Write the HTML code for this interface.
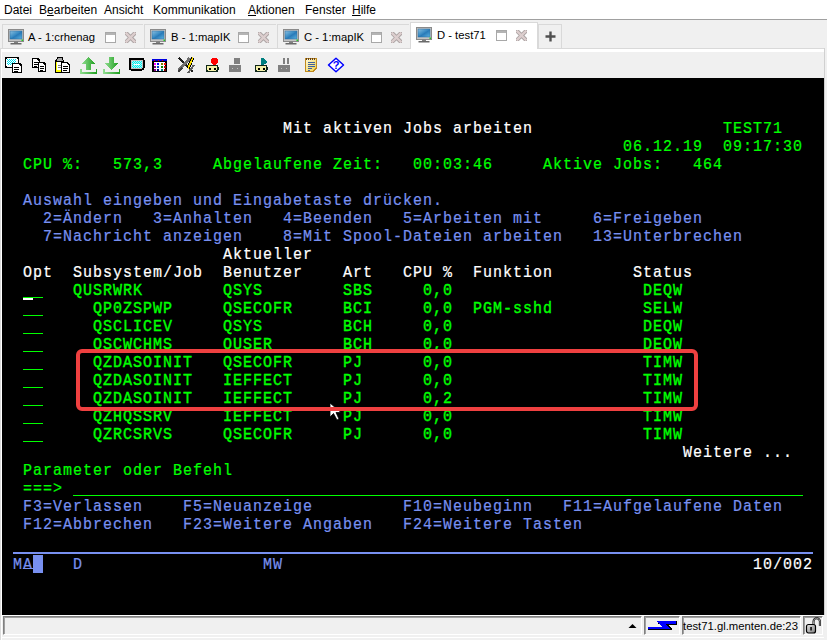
<!DOCTYPE html>
<html><head><meta charset="utf-8">
<style>
html,body{margin:0;padding:0;}
body{width:827px;height:640px;position:relative;overflow:hidden;background:#f0f0f0;font-family:"Liberation Sans",sans-serif;}
.menu{position:absolute;left:0;top:0;width:827px;height:19px;background:#fff;}
.mi{position:absolute;top:3px;font-size:12px;color:#000;line-height:15px;}
.term{position:absolute;left:2px;top:78px;width:822px;height:537px;background:#000;}
.t{position:absolute;font-family:"Liberation Mono",monospace;font-size:15px;letter-spacing:1px;line-height:18px;white-space:pre;transform:scaleY(1.1);transform-origin:0 0;}
.n{-webkit-text-stroke:0.2px currentColor;}
.b{-webkit-text-stroke:0.35px currentColor;}
.tl{position:absolute;top:30px;font-size:11.25px;line-height:14px;color:#000;white-space:pre;}
.ul{position:absolute;height:1px;background:#00ff00;}
</style></head><body>
<div class="menu">
<div class="mi" style="left:4px">Datei</div>
<div class="mi" style="left:39px">B<u>e</u>arbeiten</div>
<div class="mi" style="left:104px">Ansicht</div>
<div class="mi" style="left:153px">Kommunikation</div>
<div class="mi" style="left:248px"><u>A</u>ktionen</div>
<div class="mi" style="left:305px">Fenster</div>
<div class="mi" style="left:352px"><u>H</u>ilfe</div>
</div>
<div style="position:absolute;left:0;top:19px;width:827px;height:1px;background:#a0a0a0"></div>
<div style="position:absolute;left:0;top:20px;width:827px;height:28px;background:#f0f0f0"></div>
<div style="position:absolute;left:2px;top:24px;width:141px;height:24px;background:#f0f0f0;border-left:1px solid #d9d9d9;border-top:1px solid #d9d9d9;box-sizing:border-box"></div><svg width="17" height="17" viewBox="0 0 17 17" style="position:absolute;left:8px;top:28px">
<defs><linearGradient id="sg1" x1="0" y1="0" x2="1" y2="1"><stop offset="0" stop-color="#8cc0e0"/><stop offset="0.45" stop-color="#3a8cc4"/><stop offset="0.55" stop-color="#2a7ab8"/><stop offset="1" stop-color="#5ab4e2"/></linearGradient></defs>
<rect x="0.5" y="1.5" width="15" height="12" fill="#c4c4c4" stroke="#8a8a8a"/>
<rect x="2" y="3" width="12" height="8" fill="url(#sg1)" stroke="#2a6a9a" stroke-width="0.5"/>
<rect x="13.5" y="11.5" width="1.5" height="1.5" fill="#20d020"/>
<rect x="6" y="13.5" width="4" height="1.5" fill="#808080"/>
<rect x="2.5" y="15" width="11" height="1.5" fill="#6a6a6a"/>
</svg><div class="tl" style="left:28px;top:30px">A - 1:crhenag</div><svg width="11" height="11" viewBox="0 0 11 11" style="position:absolute;left:105px;top:32px">
<rect x="0.5" y="0.5" width="10" height="10" fill="#fff" stroke="#a8a8a8"/>
<rect x="1" y="1" width="9" height="2" fill="#b4b4b4"/>
</svg><svg width="11" height="11" viewBox="0 0 11 11" style="position:absolute;left:125px;top:32px">
<path d="M1.5 1.5 L9.5 9.5 M9.5 1.5 L1.5 9.5" stroke="#a8a0a0" stroke-width="4" stroke-linecap="square"/>
<path d="M1.5 1.5 L9.5 9.5 M9.5 1.5 L1.5 9.5" stroke="#dccece" stroke-width="2.4" stroke-linecap="square"/>
</svg>
<div style="position:absolute;left:144px;top:24px;width:132px;height:24px;background:#f0f0f0;border-left:1px solid #d9d9d9;border-top:1px solid #d9d9d9;box-sizing:border-box"></div><svg width="17" height="17" viewBox="0 0 17 17" style="position:absolute;left:150px;top:28px">
<defs><linearGradient id="sg2" x1="0" y1="0" x2="1" y2="1"><stop offset="0" stop-color="#8cc0e0"/><stop offset="0.45" stop-color="#3a8cc4"/><stop offset="0.55" stop-color="#2a7ab8"/><stop offset="1" stop-color="#5ab4e2"/></linearGradient></defs>
<rect x="0.5" y="1.5" width="15" height="12" fill="#c4c4c4" stroke="#8a8a8a"/>
<rect x="2" y="3" width="12" height="8" fill="url(#sg2)" stroke="#2a6a9a" stroke-width="0.5"/>
<rect x="13.5" y="11.5" width="1.5" height="1.5" fill="#20d020"/>
<rect x="6" y="13.5" width="4" height="1.5" fill="#808080"/>
<rect x="2.5" y="15" width="11" height="1.5" fill="#6a6a6a"/>
</svg><div class="tl" style="left:171px;top:30px">B - 1:mapIK</div><svg width="11" height="11" viewBox="0 0 11 11" style="position:absolute;left:238px;top:32px">
<rect x="0.5" y="0.5" width="10" height="10" fill="#fff" stroke="#a8a8a8"/>
<rect x="1" y="1" width="9" height="2" fill="#b4b4b4"/>
</svg><svg width="11" height="11" viewBox="0 0 11 11" style="position:absolute;left:258px;top:32px">
<path d="M1.5 1.5 L9.5 9.5 M9.5 1.5 L1.5 9.5" stroke="#a8a0a0" stroke-width="4" stroke-linecap="square"/>
<path d="M1.5 1.5 L9.5 9.5 M9.5 1.5 L1.5 9.5" stroke="#dccece" stroke-width="2.4" stroke-linecap="square"/>
</svg>
<div style="position:absolute;left:277px;top:24px;width:132px;height:24px;background:#f0f0f0;border-left:1px solid #d9d9d9;border-top:1px solid #d9d9d9;box-sizing:border-box"></div><svg width="17" height="17" viewBox="0 0 17 17" style="position:absolute;left:283px;top:28px">
<defs><linearGradient id="sg3" x1="0" y1="0" x2="1" y2="1"><stop offset="0" stop-color="#8cc0e0"/><stop offset="0.45" stop-color="#3a8cc4"/><stop offset="0.55" stop-color="#2a7ab8"/><stop offset="1" stop-color="#5ab4e2"/></linearGradient></defs>
<rect x="0.5" y="1.5" width="15" height="12" fill="#c4c4c4" stroke="#8a8a8a"/>
<rect x="2" y="3" width="12" height="8" fill="url(#sg3)" stroke="#2a6a9a" stroke-width="0.5"/>
<rect x="13.5" y="11.5" width="1.5" height="1.5" fill="#20d020"/>
<rect x="6" y="13.5" width="4" height="1.5" fill="#808080"/>
<rect x="2.5" y="15" width="11" height="1.5" fill="#6a6a6a"/>
</svg><div class="tl" style="left:304px;top:30px">C - 1:mapIK</div><svg width="11" height="11" viewBox="0 0 11 11" style="position:absolute;left:371px;top:32px">
<rect x="0.5" y="0.5" width="10" height="10" fill="#fff" stroke="#a8a8a8"/>
<rect x="1" y="1" width="9" height="2" fill="#b4b4b4"/>
</svg><svg width="11" height="11" viewBox="0 0 11 11" style="position:absolute;left:391px;top:32px">
<path d="M1.5 1.5 L9.5 9.5 M9.5 1.5 L1.5 9.5" stroke="#a8a0a0" stroke-width="4" stroke-linecap="square"/>
<path d="M1.5 1.5 L9.5 9.5 M9.5 1.5 L1.5 9.5" stroke="#dccece" stroke-width="2.4" stroke-linecap="square"/>
</svg>
<div style="position:absolute;left:0;top:48px;width:825px;height:1px;background:#d9d9d9"></div>
<div style="position:absolute;left:410px;top:22px;width:128px;height:27px;background:#ffffff;border-left:1px solid #d9d9d9;border-top:1px solid #d9d9d9;border-right:1px solid #d9d9d9;box-sizing:border-box"></div><svg width="17" height="17" viewBox="0 0 17 17" style="position:absolute;left:416px;top:26px">
<defs><linearGradient id="sg4" x1="0" y1="0" x2="1" y2="1"><stop offset="0" stop-color="#8cc0e0"/><stop offset="0.45" stop-color="#3a8cc4"/><stop offset="0.55" stop-color="#2a7ab8"/><stop offset="1" stop-color="#5ab4e2"/></linearGradient></defs>
<rect x="0.5" y="1.5" width="15" height="12" fill="#c4c4c4" stroke="#8a8a8a"/>
<rect x="2" y="3" width="12" height="8" fill="url(#sg4)" stroke="#2a6a9a" stroke-width="0.5"/>
<rect x="13.5" y="11.5" width="1.5" height="1.5" fill="#20d020"/>
<rect x="6" y="13.5" width="4" height="1.5" fill="#808080"/>
<rect x="2.5" y="15" width="11" height="1.5" fill="#6a6a6a"/>
</svg><div class="tl" style="left:437px;top:28px">D - test71</div><svg width="11" height="11" viewBox="0 0 11 11" style="position:absolute;left:496px;top:30px">
<rect x="0.5" y="0.5" width="10" height="10" fill="#fff" stroke="#a8a8a8"/>
<rect x="1" y="1" width="9" height="2" fill="#b4b4b4"/>
</svg><svg width="11" height="11" viewBox="0 0 11 11" style="position:absolute;left:516px;top:30px">
<path d="M1.5 1.5 L9.5 9.5 M9.5 1.5 L1.5 9.5" stroke="#a8a0a0" stroke-width="4" stroke-linecap="square"/>
<path d="M1.5 1.5 L9.5 9.5 M9.5 1.5 L1.5 9.5" stroke="#dccece" stroke-width="2.4" stroke-linecap="square"/>
</svg>
<div style="position:absolute;left:538px;top:24px;width:24px;height:24px;background:#f0f0f0;border:1px solid #d9d9d9;border-bottom:none;box-sizing:border-box"></div>
<svg width="12" height="12" style="position:absolute;left:545px;top:31px"><path d="M5.5 0.5V10.5M0.5 5.5H10.5" stroke="#505050" stroke-width="2.4"/></svg>
<div style="position:absolute;left:1px;top:49px;width:823px;height:29px;background:#f0f0f0;border-top:3px solid #fff;box-sizing:border-box"></div>
<div style="position:absolute;left:824px;top:48px;width:1px;height:567px;background:#d0d0d0"></div>
<div style="position:absolute;left:0px;top:48px;width:1px;height:592px;background:#dcdcdc"></div>
<div style="position:absolute;left:1px;top:49px;width:1px;height:591px;background:#fff"></div>
<svg width="18" height="18" viewBox="0 0 18 18" style="position:absolute;left:4px;top:56px" shape-rendering="crispEdges"><defs><pattern id="cy" width="2" height="2" patternUnits="userSpaceOnUse"><rect width="2" height="2" fill="#ffffff"/><rect width="1" height="1" fill="#00e0f0"/><rect x="1" y="1" width="1" height="1" fill="#00e0f0"/></pattern></defs><rect x="1.5" y="1.5" width="13" height="10" rx="2" fill="#fff" stroke="#000" stroke-width="1.6"/><rect x="3" y="3" width="9" height="6" fill="url(#cy)"/><path d="M8.5 7.5H15.5L17.5 9.5V16.5H8.5Z" fill="#fff" stroke="#000" stroke-width="1.6"/><path d="M10 11H15M10 13H15M10 15H14" stroke="#000" stroke-width="1"/></svg>
<svg width="17" height="17" viewBox="0 0 17 17" style="position:absolute;left:31px;top:57px" shape-rendering="crispEdges"><path d="M1.5 1.5H6.5L8.5 3.5V10.5H1.5Z" fill="#fff" stroke="#000" stroke-width="1.5"/><path d="M3 5H7M3 7H7M3 9H6" stroke="#000" stroke-width="1"/><path d="M7.5 5.5H12.5L14.5 7.5V14.5H7.5Z" fill="#fff" stroke="#000" stroke-width="1.5"/><path d="M9 9H13M9 11H13M9 13H12" stroke="#000" stroke-width="1"/></svg>
<svg width="17" height="18" viewBox="0 0 17 18" style="position:absolute;left:54px;top:56px" shape-rendering="crispEdges"><rect x="1.6" y="4.6" width="8" height="11.5" fill="#fff" stroke="#000" stroke-width="1.2"/><rect x="2.6" y="5.6" width="6" height="9.5" fill="none" stroke="#ffff00" stroke-width="1.4"/><path d="M3.5 1.5H8L9.5 5H2Z" fill="#a8a8a8" stroke="#000" stroke-width="1"/><path d="M7.5 6.5H13L15.5 9V16.5H7.5Z" fill="#fff" stroke="#000" stroke-width="1.5"/><path d="M9 10H14M9 12H14M9 14H13" stroke="#000"/><path d="M4 9H7M4 11H7" stroke="#808080"/></svg>
<svg width="17" height="18" viewBox="0 0 17 18" style="position:absolute;left:80px;top:56px" shape-rendering="crispEdges"><defs><linearGradient id="gr1" x1="0" y1="0" x2="1" y2="0"><stop offset="0" stop-color="#8fdc8f"/><stop offset="1" stop-color="#22a022"/></linearGradient></defs><path d="M8.5 1L15 8H11V14H6V8H2Z" fill="url(#gr1)"/><path d="M0.5 13V16.5H16.5V13" fill="none" stroke="url(#gr1)" stroke-width="2"/></svg>
<svg width="17" height="18" viewBox="0 0 17 18" style="position:absolute;left:103px;top:56px" shape-rendering="crispEdges"><defs><linearGradient id="gr2" x1="0" y1="0" x2="1" y2="0"><stop offset="0" stop-color="#8fdc8f"/><stop offset="1" stop-color="#22a022"/></linearGradient></defs><path d="M6 1H11V7H15L8.5 14L2 7H6Z" fill="url(#gr2)"/><path d="M0.5 13V16.5H16.5V13" fill="none" stroke="url(#gr2)" stroke-width="2"/></svg>
<svg width="18" height="15" viewBox="0 0 18 15" style="position:absolute;left:128px;top:57px" shape-rendering="crispEdges"><defs><pattern id="cy2" width="2" height="2" patternUnits="userSpaceOnUse"><rect width="2" height="2" fill="#00f0f0"/><rect width="1" height="1" fill="#b0f8f8"/><rect x="1" y="1" width="1" height="1" fill="#b0f8f8"/></pattern></defs><rect x="1.6" y="1.6" width="14" height="11" rx="2" fill="#c8c0c0" stroke="#000" stroke-width="2"/><rect x="4" y="4" width="9.5" height="6.5" fill="url(#cy2)"/><rect x="6" y="7" width="6" height="1" fill="#fff"/></svg>
<svg width="17" height="14" viewBox="0 0 17 14" style="position:absolute;left:151px;top:59px" shape-rendering="crispEdges"><rect x="1.8" y="2" width="13.4" height="10.6" fill="#fff" stroke="#000" stroke-width="1.6"/><rect x="1" y="0" width="15" height="2.2" fill="#0000e0"/><rect x="3" y="0.5" width="1" height="1" fill="#e00000"/><rect x="7" y="0.5" width="1" height="1" fill="#e00000"/><rect x="11" y="0.5" width="1" height="1" fill="#e00000"/><rect x="3.0" y="3.5" width="2" height="2" fill="#ff00ff"/><rect x="6.3" y="3.5" width="2" height="2" fill="#0000ff"/><rect x="9.6" y="3.5" width="2" height="2" fill="#808000"/><rect x="12.9" y="3.5" width="2" height="2" fill="#ff0000"/><rect x="3.0" y="6.5" width="2" height="2" fill="#800080"/><rect x="6.3" y="6.5" width="2" height="2" fill="#0040c0"/><rect x="9.6" y="6.5" width="2" height="2" fill="#008000"/><rect x="12.9" y="6.5" width="2" height="2" fill="#c00000"/><rect x="3.0" y="9.5" width="2" height="2" fill="#800080"/><rect x="6.3" y="9.5" width="2" height="2" fill="#000080"/><rect x="9.6" y="9.5" width="2" height="2" fill="#008080"/><rect x="12.9" y="9.5" width="2" height="2" fill="#800000"/></svg>
<svg width="18" height="18" viewBox="0 0 18 18" style="position:absolute;left:177px;top:56px" shape-rendering="crispEdges"><path d="M2 2L16 16" stroke="#202020" stroke-width="2.2"/><path d="M13 2L2 14" stroke="#707070" stroke-width="3"/><path d="M1 16L5 12" stroke="#404040" stroke-width="2"/><path d="M16 1.5L11 12.5" stroke="#000" stroke-width="3.2"/><path d="M16 1.5L11 12.5" stroke="#ffe000" stroke-width="1.6"/><path d="M17 9L11 17" stroke="#606060" stroke-width="2"/></svg>
<svg width="14" height="17" viewBox="0 0 14 17" style="position:absolute;left:205px;top:56px" shape-rendering="crispEdges"><circle cx="9.5" cy="5.2" r="3.6" fill="#ff0000"/><rect x="1.3" y="9.3" width="11.4" height="6" rx="1.4" fill="#f4f0a8" stroke="#10281a" stroke-width="1.6"/><rect x="3.5" y="11.5" width="2" height="2" fill="#000"/><rect x="8.5" y="11.5" width="2" height="2" fill="#000"/></svg>
<svg width="14" height="17" viewBox="0 0 14 17" style="position:absolute;left:228px;top:56px" shape-rendering="crispEdges"><rect x="6" y="2" width="6" height="6" fill="#808080"/><rect x="1" y="9" width="12" height="7" fill="#808080"/><rect x="4" y="12" width="1" height="1" fill="#c0c0c0"/><rect x="9" y="12" width="1" height="1" fill="#c0c0c0"/></svg>
<svg width="15" height="17" viewBox="0 0 15 17" style="position:absolute;left:254px;top:56px" shape-rendering="crispEdges"><path d="M7 2H9L14 6L9 9.5H7Z" fill="#008080"/><rect x="1.3" y="9.3" width="11.4" height="6" rx="1.4" fill="#f4f0a8" stroke="#10281a" stroke-width="1.6"/><rect x="3.5" y="11.5" width="2" height="2" fill="#000"/><rect x="8.5" y="11.5" width="2" height="2" fill="#000"/></svg>
<svg width="14" height="17" viewBox="0 0 14 17" style="position:absolute;left:277px;top:56px" shape-rendering="crispEdges"><rect x="6" y="2" width="2.4" height="6" fill="#808080"/><rect x="10" y="2" width="2.4" height="6" fill="#808080"/><rect x="1" y="9" width="12" height="7" fill="#808080"/><rect x="4" y="12" width="1" height="1" fill="#c0c0c0"/><rect x="9" y="12" width="1" height="1" fill="#c0c0c0"/></svg>
<svg width="14" height="17" viewBox="0 0 14 17" style="position:absolute;left:304px;top:56px" shape-rendering="crispEdges"><defs><linearGradient id="np" x1="0" y1="0" x2="1" y2="1"><stop offset="0" stop-color="#fffbe0"/><stop offset="1" stop-color="#f0d040"/></linearGradient></defs><path d="M1.5 2.5H12.5V12L9 15.5H1.5Z" fill="url(#np)" stroke="#c08a20" stroke-width="1.4"/><path d="M2.5 1.5V3.5M4.5 1.5V3.5M6.5 1.5V3.5M8.5 1.5V3.5M10.5 1.5V3.5" stroke="#604020" stroke-width="1"/><path d="M3.5 6H11M3.5 8H11M3.5 10H11M3.5 12H8M3.5 14H6" stroke="#4060a0" stroke-width="1"/></svg>
<svg width="18" height="16" viewBox="0 0 18 16" style="position:absolute;left:327px;top:57px"><path d="M9 1.2L16.5 8L9 14.8L1.5 8Z" fill="#fff" stroke="#0000ff" stroke-width="1.5" stroke-linejoin="round"/><text x="9" y="12.3" text-anchor="middle" font-family="Liberation Sans" font-weight="bold" font-size="11" fill="#0000ff">?</text></svg>
<div style="position:absolute;left:2px;top:615px;width:822px;height:1px;background:#fff"></div>
<div style="position:absolute;left:3px;top:616px;width:639px;height:19px;background:#f0f0f0;border-top:1px solid #808080;border-left:1px solid #808080;border-bottom:1px solid #fff;border-right:1px solid #fff;box-sizing:border-box"></div>
<div style="position:absolute;left:4px;top:617px;width:637px;height:1px;background:#a0a0a0"></div>
<div style="position:absolute;left:4px;top:617px;width:1px;height:17px;background:#a0a0a0"></div>
<div style="position:absolute;left:644px;top:616px;width:36px;height:19px;background:#f0f0f0;border-top:1px solid #808080;border-left:1px solid #808080;border-bottom:1px solid #fff;border-right:1px solid #fff;box-sizing:border-box"></div>
<div style="position:absolute;left:645px;top:617px;width:34px;height:1px;background:#a0a0a0"></div>
<div style="position:absolute;left:645px;top:617px;width:1px;height:17px;background:#a0a0a0"></div>
<div style="position:absolute;left:682px;top:616px;width:119px;height:19px;background:#f0f0f0;border-top:1px solid #808080;border-left:1px solid #808080;border-bottom:1px solid #fff;border-right:1px solid #fff;box-sizing:border-box"></div>
<div style="position:absolute;left:683px;top:617px;width:117px;height:1px;background:#a0a0a0"></div>
<div style="position:absolute;left:683px;top:617px;width:1px;height:17px;background:#a0a0a0"></div>
<div style="position:absolute;left:803px;top:616px;width:20px;height:19px;background:#f0f0f0;border-top:1px solid #808080;border-left:1px solid #808080;border-bottom:1px solid #fff;border-right:1px solid #fff;box-sizing:border-box"></div>
<div style="position:absolute;left:804px;top:617px;width:18px;height:1px;background:#a0a0a0"></div>
<div style="position:absolute;left:804px;top:617px;width:1px;height:17px;background:#a0a0a0"></div>
<div style="position:absolute;left:2px;top:637px;width:822px;height:1px;background:#fff"></div>
<svg width="9" height="6" style="position:absolute;left:628px;top:623px"><path d="M0.5 5H8.5L4.5 1Z" fill="#000"/></svg>
<svg width="32" height="12" style="position:absolute;left:647px;top:620px" shape-rendering="crispEdges"><path d="M11 1H30V4.5H20.5L25 8V10H23L16 4.5V1Z" fill="#000"/><path d="M1 7H16L10.5 3H29V4H19L24.5 9.5H1Z" fill="#000"/><path d="M1 7H15.5L10 1H29V4H18.5L23.5 9H1Z" fill="#0000ff"/></svg>
<div style="position:absolute;left:683px;top:619px;font-size:11.3px;line-height:14px;color:#000;white-space:pre;letter-spacing:0px">test71.gl.menten.de:23</div>
<svg width="18" height="17" style="position:absolute;left:804px;top:617px"><defs><linearGradient id="lk" x1="0" y1="0" x2="1" y2="1"><stop offset="0" stop-color="#e8e8e8"/><stop offset="1" stop-color="#808080"/></linearGradient></defs><path d="M9.5 8.5V4.5a3.2 3.2 0 0 1 6.4 0V9" fill="none" stroke="#000" stroke-width="2"/><path d="M9.5 8.5V4.5a3.2 3.2 0 0 1 6.4 0V9" fill="none" stroke="#fff" stroke-width="0.6"/><rect x="2.5" y="7.5" width="9" height="8.5" rx="2" fill="url(#lk)" stroke="#000" stroke-width="1.2"/><rect x="6.3" y="10" width="1.5" height="3.5" fill="#000"/></svg>
<div class="term"></div>
<div id="tt" style="position:absolute;left:0;top:0">
<div class="t n" style="left:283px;top:120px;color:#ffffff">Mit aktiven Jobs arbeiten</div>
<div class="t n" style="left:723px;top:120px;color:#00ff00">TEST71</div>
<div class="t n" style="left:623px;top:138px;color:#00ff00">06.12.19  09:17:30</div>
<div class="t n" style="left:23px;top:156px;color:#00ff00">CPU %:</div>
<div class="t n" style="left:113px;top:156px;color:#00ff00">573,3</div>
<div class="t n" style="left:213px;top:156px;color:#00ff00">Abgelaufene Zeit:</div>
<div class="t n" style="left:413px;top:156px;color:#00ff00">00:03:46</div>
<div class="t n" style="left:543px;top:156px;color:#00ff00">Aktive Jobs:</div>
<div class="t n" style="left:693px;top:156px;color:#00ff00">464</div>
<div class="t n" style="left:23px;top:192px;color:#7890f0">Auswahl eingeben und Eingabetaste drücken.</div>
<div class="t n" style="left:43px;top:210px;color:#7890f0">2=Ändern</div>
<div class="t n" style="left:153px;top:210px;color:#7890f0">3=Anhalten</div>
<div class="t n" style="left:283px;top:210px;color:#7890f0">4=Beenden</div>
<div class="t n" style="left:403px;top:210px;color:#7890f0">5=Arbeiten mit</div>
<div class="t n" style="left:593px;top:210px;color:#7890f0">6=Freigeben</div>
<div class="t n" style="left:43px;top:228px;color:#7890f0">7=Nachricht anzeigen</div>
<div class="t n" style="left:283px;top:228px;color:#7890f0">8=Mit Spool-Dateien arbeiten</div>
<div class="t n" style="left:593px;top:228px;color:#7890f0">13=Unterbrechen</div>
<div class="t n" style="left:223px;top:246px;color:#ffffff">Aktueller</div>
<div class="t n" style="left:23px;top:264px;color:#ffffff">Opt</div>
<div class="t n" style="left:73px;top:264px;color:#ffffff">Subsystem/Job</div>
<div class="t n" style="left:223px;top:264px;color:#ffffff">Benutzer</div>
<div class="t n" style="left:343px;top:264px;color:#ffffff">Art</div>
<div class="t n" style="left:403px;top:264px;color:#ffffff">CPU %</div>
<div class="t n" style="left:473px;top:264px;color:#ffffff">Funktion</div>
<div class="t n" style="left:633px;top:264px;color:#ffffff">Status</div>
<div class="t b" style="left:73px;top:282px;color:#00ff00">QUSRWRK</div>
<div class="t b" style="left:223px;top:282px;color:#00ff00">QSYS</div>
<div class="t b" style="left:343px;top:282px;color:#00ff00">SBS</div>
<div class="t b" style="left:423px;top:282px;color:#00ff00">0,0</div>
<div class="t b" style="left:643px;top:282px;color:#00ff00">DEQW</div>
<div class="t b" style="left:93px;top:300px;color:#00ff00">QP0ZSPWP</div>
<div class="t b" style="left:223px;top:300px;color:#00ff00">QSECOFR</div>
<div class="t b" style="left:343px;top:300px;color:#00ff00">BCI</div>
<div class="t b" style="left:423px;top:300px;color:#00ff00">0,0</div>
<div class="t b" style="left:473px;top:300px;color:#00ff00">PGM-sshd</div>
<div class="t b" style="left:643px;top:300px;color:#00ff00">SELW</div>
<div class="t b" style="left:93px;top:318px;color:#00ff00">QSCLICEV</div>
<div class="t b" style="left:223px;top:318px;color:#00ff00">QSYS</div>
<div class="t b" style="left:343px;top:318px;color:#00ff00">BCH</div>
<div class="t b" style="left:423px;top:318px;color:#00ff00">0,0</div>
<div class="t b" style="left:643px;top:318px;color:#00ff00">DEQW</div>
<div class="t b" style="left:93px;top:336px;color:#00ff00">QSCWCHMS</div>
<div class="t b" style="left:223px;top:336px;color:#00ff00">QUSER</div>
<div class="t b" style="left:343px;top:336px;color:#00ff00">BCH</div>
<div class="t b" style="left:423px;top:336px;color:#00ff00">0,0</div>
<div class="t b" style="left:643px;top:336px;color:#00ff00">DEQW</div>
<div class="t b" style="left:93px;top:354px;color:#00ff00">QZDASOINIT</div>
<div class="t b" style="left:223px;top:354px;color:#00ff00">QSECOFR</div>
<div class="t b" style="left:343px;top:354px;color:#00ff00">PJ</div>
<div class="t b" style="left:423px;top:354px;color:#00ff00">0,0</div>
<div class="t b" style="left:643px;top:354px;color:#00ff00">TIMW</div>
<div class="t b" style="left:93px;top:372px;color:#00ff00">QZDASOINIT</div>
<div class="t b" style="left:223px;top:372px;color:#00ff00">IEFFECT</div>
<div class="t b" style="left:343px;top:372px;color:#00ff00">PJ</div>
<div class="t b" style="left:423px;top:372px;color:#00ff00">0,0</div>
<div class="t b" style="left:643px;top:372px;color:#00ff00">TIMW</div>
<div class="t b" style="left:93px;top:390px;color:#00ff00">QZDASOINIT</div>
<div class="t b" style="left:223px;top:390px;color:#00ff00">IEFFECT</div>
<div class="t b" style="left:343px;top:390px;color:#00ff00">PJ</div>
<div class="t b" style="left:423px;top:390px;color:#00ff00">0,2</div>
<div class="t b" style="left:643px;top:390px;color:#00ff00">TIMW</div>
<div class="t b" style="left:93px;top:408px;color:#00ff00">QZHQSSRV</div>
<div class="t b" style="left:223px;top:408px;color:#00ff00">IEFFECT</div>
<div class="t b" style="left:343px;top:408px;color:#00ff00">PJ</div>
<div class="t b" style="left:423px;top:408px;color:#00ff00">0,0</div>
<div class="t b" style="left:643px;top:408px;color:#00ff00">TIMW</div>
<div class="t b" style="left:93px;top:426px;color:#00ff00">QZRCSRVS</div>
<div class="t b" style="left:223px;top:426px;color:#00ff00">QSECOFR</div>
<div class="t b" style="left:343px;top:426px;color:#00ff00">PJ</div>
<div class="t b" style="left:423px;top:426px;color:#00ff00">0,0</div>
<div class="t b" style="left:643px;top:426px;color:#00ff00">TIMW</div>
<div class="t n" style="left:683px;top:444px;color:#ffffff">Weitere ...</div>
<div class="t n" style="left:23px;top:462px;color:#00ff00">Parameter oder Befehl</div>
<div class="t n" style="left:23px;top:480px;color:#00ff00">===&gt;</div>
<div class="t n" style="left:23px;top:498px;color:#7890f0">F3=Verlassen</div>
<div class="t n" style="left:183px;top:498px;color:#7890f0">F5=Neuanzeige</div>
<div class="t n" style="left:403px;top:498px;color:#7890f0">F10=Neubeginn</div>
<div class="t n" style="left:563px;top:498px;color:#7890f0">F11=Aufgelaufene Daten</div>
<div class="t n" style="left:23px;top:516px;color:#7890f0">F12=Abbrechen</div>
<div class="t n" style="left:183px;top:516px;color:#7890f0">F23=Weitere Angaben</div>
<div class="t n" style="left:403px;top:516px;color:#7890f0">F24=Weitere Tasten</div>
<div class="ul" style="left:23px;top:297px;width:20px"></div>
<div class="ul" style="left:23px;top:315px;width:20px"></div>
<div class="ul" style="left:23px;top:333px;width:20px"></div>
<div class="ul" style="left:23px;top:351px;width:20px"></div>
<div class="ul" style="left:23px;top:369px;width:20px"></div>
<div class="ul" style="left:23px;top:387px;width:20px"></div>
<div class="ul" style="left:23px;top:405px;width:20px"></div>
<div class="ul" style="left:23px;top:423px;width:20px"></div>
<div class="ul" style="left:23px;top:441px;width:20px"></div>
<div class="ul" style="left:73px;top:495px;width:730px"></div>
<div style="position:absolute;left:23px;top:298px;width:10px;height:2px;background:#fff"></div>
<svg width="14" height="20" style="position:absolute;left:329px;top:402px"><path d="M1 1V15L4.5 11.5L8 18L10 17L7 10.5H12Z" fill="#fff" stroke="#000" stroke-width="0.8"/></svg>
<div style="position:absolute;left:76px;top:349px;width:622px;height:62px;border:4px solid #ef4040;border-radius:6px;box-sizing:border-box"></div>

<div style="position:absolute;left:13px;top:552px;width:800px;height:2px;background:#7890f0"></div>
<div class="t n" style="left:13px;top:556px;color:#7890f0">M</div>
<div class="t n" style="left:23px;top:556px;color:#7890f0">A</div>
<div style="position:absolute;left:23px;top:568px;width:10px;height:1px;background:#7890f0"></div>
<div style="position:absolute;left:33px;top:555px;width:10px;height:18px;background:#7890f0"></div>
<div class="t n" style="left:73px;top:556px;color:#7890f0">D</div>
<div class="t n" style="left:263px;top:556px;color:#7890f0">MW</div>
<div class="t n" style="left:753px;top:556px;color:#ffffff">10/002</div>

</div>
</body></html>
